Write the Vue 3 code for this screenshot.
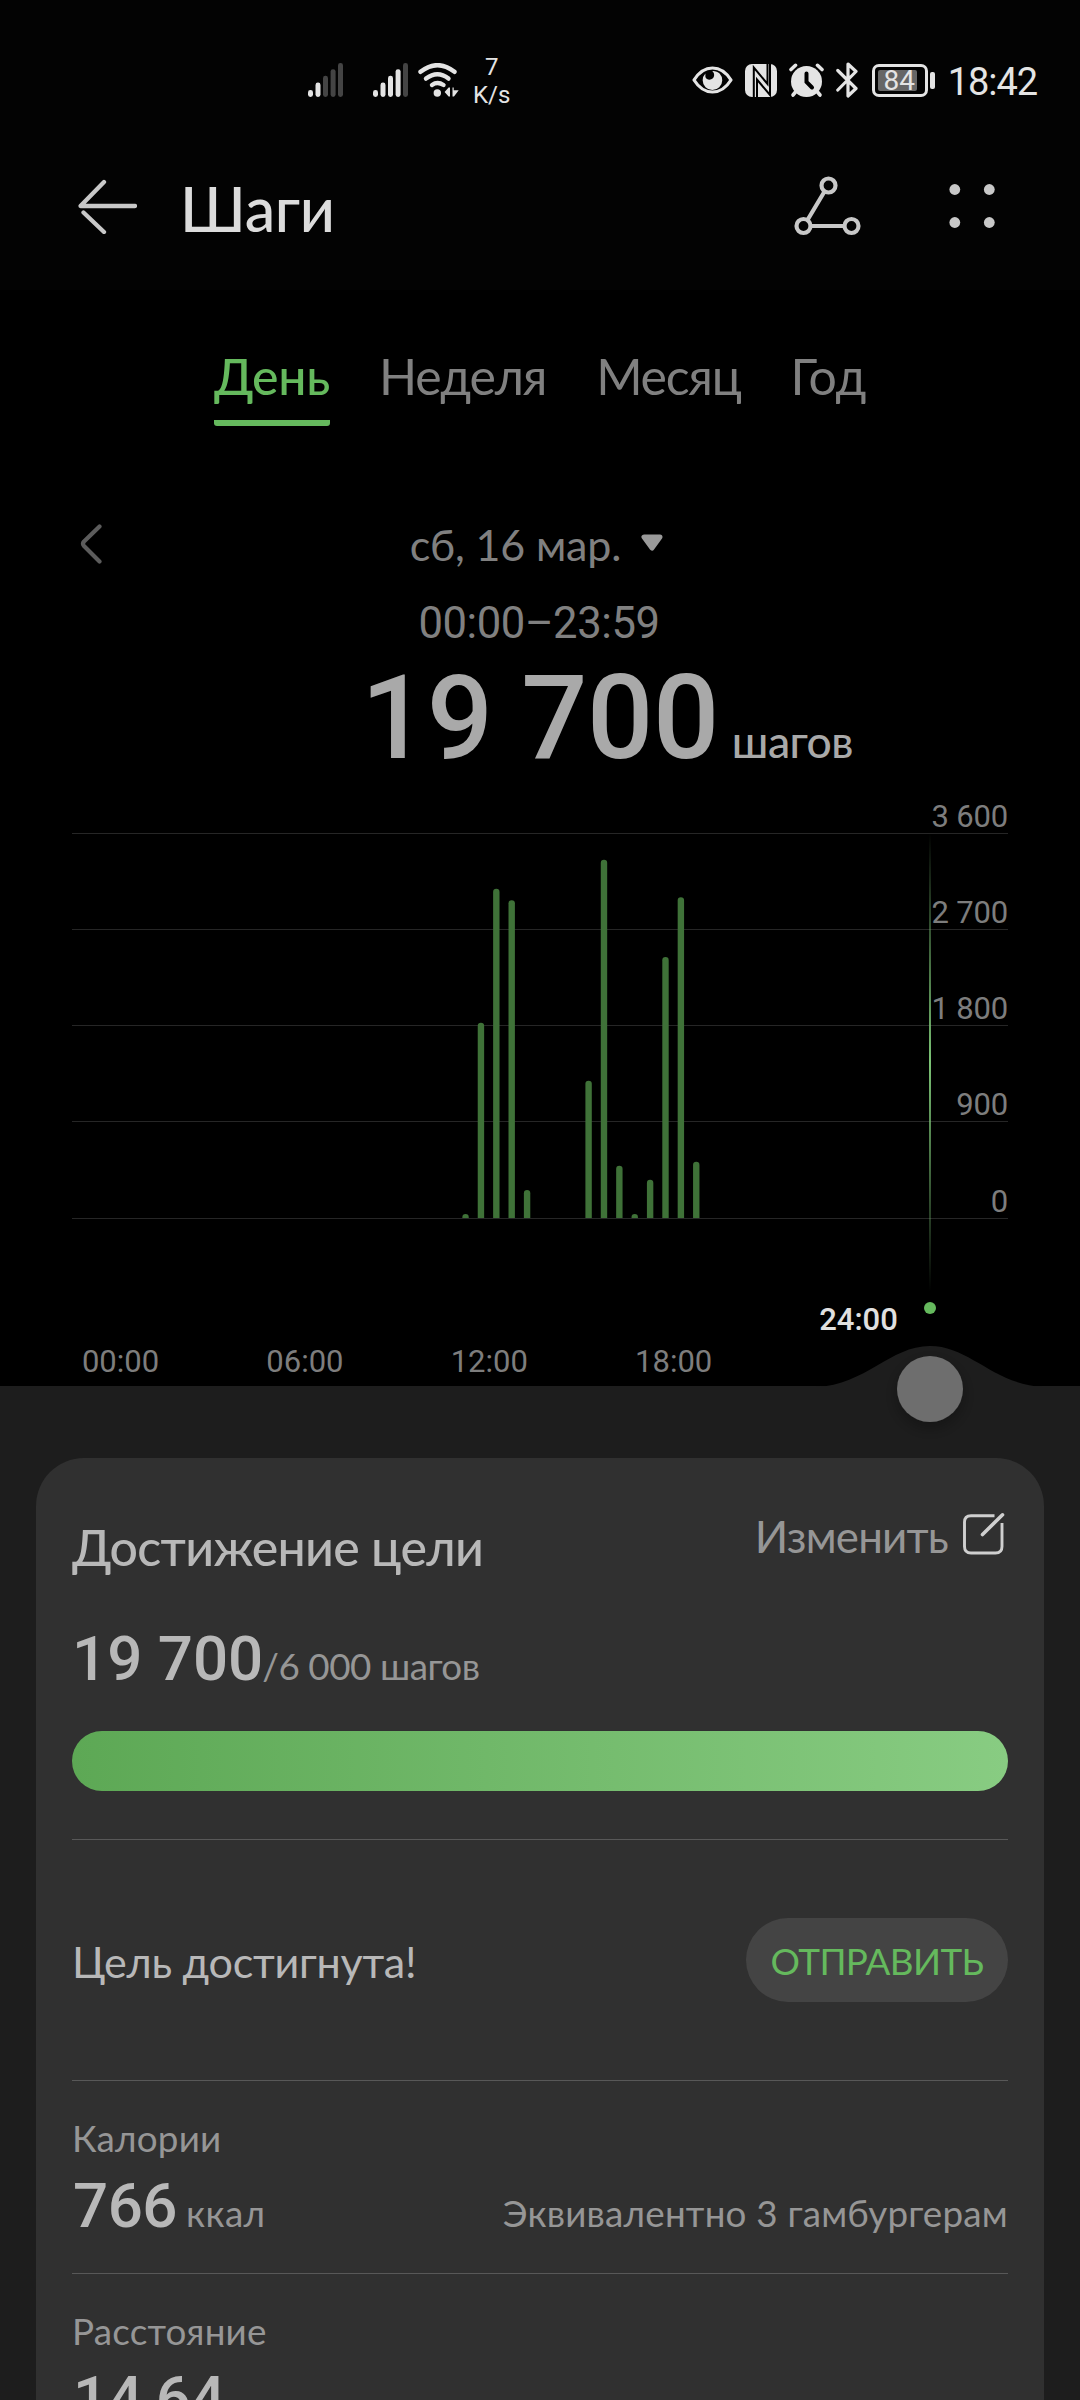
<template>
  <div class="steps">
    <!-- Barra de estado -->
    <div class="status">
      <svg class="signal" viewBox="0 0 35 34" width="35" height="34">
        <rect v-for="(b, i) in signalBars" :key="i" :x="b.x" :y="b.y" width="5" :height="34 - b.y" rx="2.4" :fill="i < 2 ? '#e4e4e4' : '#444'" />
      </svg>
      <svg class="signal second" viewBox="0 0 35 34" width="35" height="34">
        <rect v-for="(b, i) in signalBars" :key="i" :x="b.x" :y="b.y" width="5" :height="34 - b.y" rx="2.4" :fill="i < 4 ? '#e4e4e4' : '#444'" />
      </svg>
      <svg class="wifi" viewBox="0 0 42 34" width="42" height="34" fill="none" stroke="#e4e4e4" stroke-width="4.4" stroke-linecap="round">
        <path d="M2.5 8.8Q19.5-4.5 36.5 8.8" />
        <path d="M8 15.6Q19.5 7 30.5 15.6" />
        <path d="M14 22Q19.5 18.2 25.5 22" />
        <circle cx="19.3" cy="30" r="3.7" fill="#e4e4e4" stroke="none" />
        <path d="M32 24.5v9h-1.4l-4-4.6 4-4.4zM34.5 24.5h1.2v2.7h5l-4.7 6.3h-1.5z" fill="#e4e4e4" stroke="none" />
      </svg>
      <div class="speed"><span>7</span><span>K/s</span></div>
      <div class="status-right">
        <svg viewBox="0 0 41 28" width="41" height="28">
          <path d="M2 14C12-2 29-2 39 14C29 30 12 30 2 14Z" fill="none" stroke="#e4e4e4" stroke-width="3.2" stroke-linejoin="round" />
          <path d="M13.4 7.4a9.8 9.8 0 1 0 14.2.1c-1.9-1.8-4.4-2.7-7.4-2.5 2.4 1.8 2.6 5.400.7 7.300-2.300 2.200-6.300 1.800-7.500-1.200z" fill="#e4e4e4" />
        </svg>
        <svg viewBox="0 0 32 33" width="32" height="33">
          <rect width="32" height="33" rx="7" fill="#e4e4e4" />
          <path d="M8.8 33V3.5L22.5 20V0M25 0V31L12 15.500V33" fill="none" stroke="#000" stroke-width="2" />
        </svg>
        <svg viewBox="0 0 35 35" width="35" height="35" stroke="#e4e4e4" stroke-linecap="round">
          <circle cx="17.5" cy="18.5" r="15.5" fill="#e4e4e4" stroke="none" />
          <path d="M2 6.5L6.5 2.3M33 6.5L28.5 2.3" stroke-width="3.6" />
          <path d="M6.5 29L4 32M28.5 29L31 32" stroke-width="3.6" />
          <path d="M17.5 10.500v8.500l5.500 5.500" fill="none" stroke="#000" stroke-width="4" />
        </svg>
        <svg viewBox="0 0 22 36" width="22" height="36" fill="none" stroke="#e4e4e4" stroke-width="3.2" stroke-linecap="round" stroke-linejoin="round">
          <path d="M1.8 8.5L20 26.5L12 34V2L20 9.5L1.8 28" />
        </svg>
        <div class="battery"><div class="cell"><span>84</span></div><i></i></div>
        <span class="clock">18:42</span>
      </div>
    </div>

    <!-- Cabecera -->
    <header class="header">
      <svg viewBox="0 0 60 56" width="60" height="56" fill="none" stroke="#c8c8c8" stroke-width="4.3" stroke-linecap="round" stroke-linejoin="round">
        <path d="M58 28H3.500L27 4" />
        <path d="M6.5 34.5L27 54" />
      </svg>
      <h1>Шаги</h1>
      <svg class="share" viewBox="0 0 68 60" width="68" height="60" fill="none" stroke="#c8c8c8" stroke-width="4.2">
        <circle cx="35.5" cy="9.5" r="7" />
        <circle cx="10.5" cy="50" r="7" />
        <circle cx="58.5" cy="50" r="7" />
        <path d="M31.5 15.5L14.5 44M17.5 50h34" />
      </svg>
      <svg viewBox="0 0 46 46" width="46" height="46" fill="#c8c8c8">
        <circle cx="5.8" cy="6.5" r="5.4" /><circle cx="40.3" cy="6.5" r="5.4" />
        <circle cx="5.8" cy="39.5" r="5.4" /><circle cx="40.3" cy="39.5" r="5.4" />
      </svg>
    </header>

    <!-- Periodos -->
    <nav class="tabs">
      <a v-for="t in tabs" :key="t.id" :class="[t.id, { active: t.id === activeTab }]" @click="activeTab = t.id">{{ t.label }}</a>
    </nav>

    <!-- Fecha y total -->
    <div class="date-row">
      <svg viewBox="0 0 26 42" width="26" height="42" fill="none" stroke="#5c5c5c" stroke-width="4.2" stroke-linecap="round" stroke-linejoin="round">
        <path d="M21.5 2.500L6 17.500Q4 19.800 6 22L21.5 37.500" />
      </svg>
      <div class="date">
        <span>сб, 16 мар.</span>
        <svg viewBox="0 0 24 20" width="24" height="20">
          <path d="M4 4H20L12 15Z" fill="#9a9a9a" stroke="#9a9a9a" stroke-width="5" stroke-linejoin="round" />
        </svg>
      </div>
    </div>
    <div class="time">00:00–23:59</div>
    <div class="total"><span class="num">19 700</span><span class="unit">шагов</span></div>

    <!-- Gráfico -->
    <svg class="chart" viewBox="0 0 1080 619" width="1080" height="619">
      <defs>
        <linearGradient id="cursor" x1="0" y1="0" x2="0" y2="1">
          <stop offset="0" stop-color="#7cc476" stop-opacity="0" />
          <stop offset="0.5" stop-color="#7cc476" />
          <stop offset="1" stop-color="#7cc476" stop-opacity="0" />
        </linearGradient>
        <filter id="shadow" x="-50%" y="-50%" width="200%" height="200%">
          <feDropShadow dx="0" dy="6" stdDeviation="8" flood-color="#000" flood-opacity="0.3" />
        </filter>
      </defs>
      <g v-for="v in scale" :key="v">
        <rect x="72" :y="Math.floor(yOf(v))" width="936" height="1" fill="#262626" />
        <text class="y-label" x="1008" :y="Math.floor(yOf(v)) - 6" text-anchor="end">{{ format(v) }}</text>
      </g>
      <path v-for="b in bars" :key="b.slot" :d="barPath(b)" fill="#3f7238" />
      <rect x="929" y="66" width="2" height="458" fill="url(#cursor)" />
      <text v-for="(h, i) in hours" :key="h" class="x-label" :x="120.5 + i * 184.4" y="605" text-anchor="middle">{{ h }}</text>
      <text class="x-label now" x="858.5" y="563" text-anchor="middle">24:00</text>
      <circle cx="930" cy="541" r="6" fill="#65b95d" />
      <path d="M816 620C866 618 890 579 930 579S994 618 1044 620Z" fill="#1d1d1d" />
      <circle cx="930" cy="622" r="33" fill="#6e6e6e" filter="url(#shadow)" />
    </svg>

    <div class="panel">
      <section class="card">
        <div class="card-head">
          <h2>Достижение цели</h2>
          <div class="edit">
            <span>Изменить</span>
            <svg viewBox="0 0 44 44" width="44" height="44" fill="none" stroke="#cfcfcf" stroke-width="2.9" stroke-linecap="round">
              <path d="M32.5 3.8H9Q2.5 3.8 2.5 10.3V34.5Q2.5 41 9 41H33.5Q40 41 40 34.5V11" stroke-linecap="butt" />
              <path d="M20.5 22.5L40.5 2.8" stroke-width="3.6" />
            </svg>
          </div>
        </div>
        <div class="goal"><span class="num">19 700</span><span class="of">/6 000 шагов</span></div>
        <div class="progress"></div>
        <div class="reached">
          <span>Цель достигнута!</span>
          <button>ОТПРАВИТЬ</button>
        </div>
        <div v-for="m in metrics" :key="m.name" class="metric">
          <div class="name">{{ m.name }}</div>
          <div class="value">
            <span class="num">{{ m.value }}</span>
            <span class="unit">{{ m.unit }}</span>
            <span class="note">{{ m.note }}</span>
          </div>
        </div>
      </section>
    </div>
  </div>
</template>

<script setup>
import { ref } from "vue"

const signalBars = [
  { x: 0, y: 27 },
  { x: 7.5, y: 19.5 },
  { x: 15, y: 12.8 },
  { x: 22.6, y: 6.2 },
  { x: 30, y: 0 },
]

const tabs = [
  { id: "day", label: "День" },
  { id: "week", label: "Неделя" },
  { id: "month", label: "Месяц" },
  { id: "year", label: "Год" },
]
const activeTab = ref("day")

const scale = [3600, 2700, 1800, 900, 0]
const hours = ["00:00", "06:00", "12:00", "18:00"]

// slot = media hora del día
const bars = [
  { slot: 22, steps: 38 },
  { slot: 23, steps: 1825 },
  { slot: 24, steps: 3078 },
  { slot: 25, steps: 2972 },
  { slot: 26, steps: 262 },
  { slot: 30, steps: 1284 },
  { slot: 31, steps: 3350 },
  { slot: 32, steps: 488 },
  { slot: 33, steps: 38 },
  { slot: 34, steps: 358 },
  { slot: 35, steps: 2440 },
  { slot: 36, steps: 3000 },
  { slot: 37, steps: 526 },
]

const metrics = [
  { name: "Калории", value: "766", unit: "ккал", note: "Эквивалентно 3 гамбургерам" },
  { name: "Расстояние", value: "14,64", unit: "", note: "" },
]

const yOf = (v) => 451 - (v / 3600) * 385

const format = (v) => (v >= 1000 ? `${Math.floor(v / 1000)} ${String(v % 1000).padStart(3, "0")}` : String(v))

const barPath = (b) => {
  const x = 124 + b.slot * 15.38
  const top = yOf(b.steps)
  return `M${x} 451V${top + 3.2}a3.2 3.2 0 0 1 6.4 0V451z`
}
</script>

<style>
body { background: #000; }
</style>

<style scoped>
.steps {
  width: 1080px;
  height: 2400px;
  overflow: hidden;
  display: flex;
  flex-direction: column;
  background: #000;
  color: #b8b8b8;
  font-family: Lato, sans-serif;
}
.steps > * { flex: none; }
svg { display: block; flex: none; }
span, a, h1, h2 { white-space: nowrap; }

.status {
  height: 132px;
  padding: 28px 43px 0 308px;
  box-sizing: border-box;
  display: flex;
  align-items: center;
  background: #030303;
  color: #e4e4e4;
  font-family: Roboto, sans-serif;
}
.second { margin-left: 30px; }
.wifi { margin-left: 10px; }
.speed {
  margin-left: 13px;
  padding-top: 2px;
  display: flex;
  flex-direction: column;
  align-items: center;
  font-size: 24px;
  line-height: 28px;
}
.status-right { margin-left: auto; display: flex; align-items: center; gap: 12px; }
.battery { display: flex; align-items: center; gap: 2px; margin-left: 2px; }
.cell {
  width: 56px;
  height: 33px;
  box-sizing: border-box;
  border: 3px solid #e4e4e4;
  border-radius: 7px;
  padding: 3px;
  display: flex;
}
.cell span {
  width: 39px;
  height: 21px;
  background: #666;
  border-radius: 2px;
  font-size: 28px;
  line-height: 22px;
  text-align: center;
  text-indent: 3px;
}
.battery i { width: 4.5px; height: 17px; border-radius: 2px; background: #e4e4e4; }
.clock { font-size: 38px; letter-spacing: -1.07px; line-height: 44px; margin-left: 1px; padding-top: 3px; }

.header {
  height: 158px;
  padding: 0 85px 10px 77px;
  box-sizing: border-box;
  display: flex;
  align-items: center;
  background: #030303;
}
h1 {
  margin: 0 auto 0 43px;
  padding-top: 6px;
  font-size: 61px;
  line-height: 76px;
  font-weight: 500;
  letter-spacing: -0.3px;
  color: #dcdcdc;
}
.share { margin-right: 88px; }

.tabs { display: flex; gap: 49px; padding: 56px 0 0 214px; font-size: 50px; line-height: 60px; color: #808080; }
.tabs a { height: 80px; box-sizing: border-box; }
.day { letter-spacing: -0.2px; }
.week { letter-spacing: -1.2px; }
.month { letter-spacing: -1.3px; }
.year { letter-spacing: -0.33px; }
.tabs .month { margin-left: 1px; }
.tabs .year { margin-left: 1px; }
.tabs .active {
  color: #65b95d;
  font-weight: 500;
  background: linear-gradient(#65b95d, #65b95d) bottom / 100% 6px no-repeat;
  border-radius: 3px;
}

.date-row {
  margin-top: 87px;
  height: 64px;
  padding: 0 84px 0 78px;
  display: grid;
  grid-template-columns: 1fr auto 1fr;
  align-items: center;
}
.date { display: flex; align-items: center; gap: 19px; font-size: 43px; letter-spacing: -0.15px; color: #808080; line-height: 64px; }
.date svg { margin-top: -5px; }
.time {
  margin-top: 15px;
  padding-right: 2px;
  text-align: center;
  font: 43.6px/64px Roboto, sans-serif;
  letter-spacing: -0.42px;
  color: #808080;
}
.total { margin-top: 12px; height: 99px; padding-left: 361px; display: flex; align-items: baseline; color: #a9a9a9; font-weight: 500; }
.total .num { font: 500 116.7px/100px Roboto, sans-serif; letter-spacing: -0.46px; }
.total .unit { font-size: 44.4px; line-height: 50px; letter-spacing: -0.55px; margin-left: 13px; }

.chart { position: relative; z-index: 1; overflow: visible; font-family: Roboto, sans-serif; font-size: 31px; }
.y-label { fill: #7d7d7d; letter-spacing: -0.19px; }
.x-label { fill: #7d7d7d; }
.now { fill: #e0e0e0; font-weight: 500; }

.panel { background: #1d1d1d; padding: 72px 36px 0; }
.card { height: 942px; box-sizing: border-box; padding: 48px 36px 0; border-radius: 48px 48px 0 0; background: #303030; overflow: hidden; }
.card-head { display: flex; justify-content: space-between; align-items: flex-start; }
h2 { margin: 0; font-size: 50px; line-height: 82px; font-weight: 500; letter-spacing: -0.64px; }
.edit { display: flex; align-items: center; gap: 14px; padding-right: 2px; color: #969696; font-size: 43.8px; line-height: 60px; letter-spacing: -0.79px; }
.edit svg { margin-top: -4px; }
.num { font-family: Roboto, sans-serif; font-weight: 500; }
.goal { margin-top: 31px; height: 80px; display: flex; align-items: baseline; line-height: 80px; }
.goal .num { font-size: 61.9px; }
.of { margin-left: -1px; font-size: 36.8px; letter-spacing: -0.46px; color: #969696; }
.progress { margin-top: 32px; height: 60px; border-radius: 30px; background: linear-gradient(90deg, #5da855, #88cc82); }
.reached {
  margin-top: 48px;
  height: 242px;
  box-sizing: border-box;
  border: solid #585858;
  border-width: 1px 0;
  display: flex;
  align-items: center;
  justify-content: space-between;
  font-size: 43.1px;
  letter-spacing: -0.28px;
}
.reached span { padding-top: 1px; }
.reached button {
  width: 262px;
  height: 84px;
  padding: 2px 0 0;
  border: none;
  border-radius: 42px;
  background: #444;
  color: #65b95d;
  font: 36.8px Lato, sans-serif;
  letter-spacing: -0.6px;
}
.metric { height: 193px; box-sizing: border-box; padding-top: 32px; border-bottom: 1px solid #585858; color: #969696; }
.name { font-size: 36.8px; line-height: 50px; letter-spacing: 0.2px; }
.value { margin-top: 6px; height: 74px; display: flex; align-items: baseline; font-size: 36.8px; line-height: 74px; }
.value .num { font-size: 61.9px; letter-spacing: -0.5px; padding-left: 1px; color: #b8b8b8; }
.value .unit { margin-left: 9px; letter-spacing: 0.4px; }
.value .note { margin-left: auto; letter-spacing: 0.21px; }
</style>
